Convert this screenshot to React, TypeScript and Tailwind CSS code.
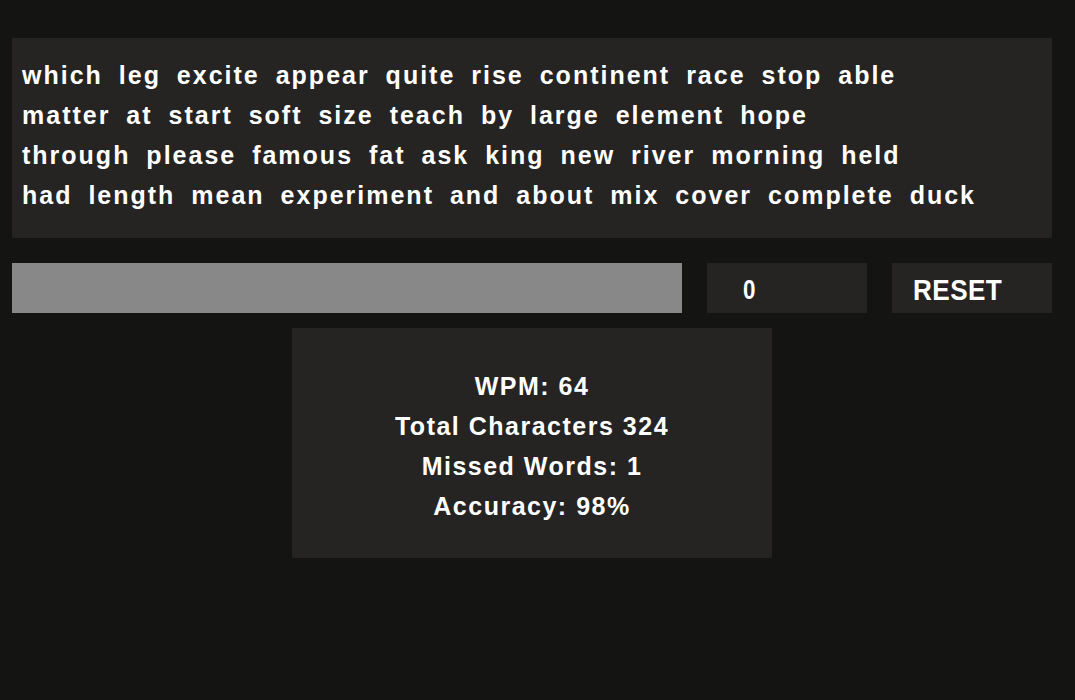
import React from 'react';

const lines = [
    'which leg excite appear quite rise continent race stop able',
    'matter at start soft size teach by large element hope',
    'through please famous fat ask king new river morning held',
    'had length mean experiment and about mix cover complete duck',
];

const stats = ['WPM: 64', 'Total Characters 324', 'Missed Words: 1', 'Accuracy: 98%'];

export default function App() {
    return (
        <div className="min-h-[700px] w-full bg-[#141413] pt-[38px] px-[12px] font-['Liberation_Sans',Arial,sans-serif] text-white">
            <div className="w-[1040px] h-[200px] bg-[#252423] pl-[10px] pt-[17px]">
                {lines.map((l) => (
                    <div key={l} className="h-[40px] leading-[40px] text-[25px] font-bold tracking-[2px] [word-spacing:7px] whitespace-nowrap">
                        {l}
                    </div>
                ))}
            </div>
            <div className="flex mt-[25px] h-[50px] w-[1040px]">
                <div className="w-[670px] bg-[#888888]" />
                <div className="w-[160px] ml-[25px] bg-[#252423] flex items-center pl-[36px] pt-[4px] text-[28px] font-bold">
                    <span className="inline-block origin-left scale-x-[0.8]">0</span>
                </div>
                <div className="w-[160px] ml-[25px] bg-[#252423] flex items-center pl-[21px] pt-[2px] text-[30px] font-bold">
                    <span className="inline-block origin-left scale-x-[0.87] tracking-[0.5px]">RESET</span>
                </div>
            </div>
            <div className="flex justify-center w-[1040px] mt-[15px]">
                <div className="w-[480px] h-[230px] bg-[#252423] flex flex-col justify-center items-center pt-[6px]">
                    {stats.map((s) => (
                        <div key={s} className="h-[40px] leading-[40px] text-[25px] font-bold tracking-[1.5px]">
                            {s}
                        </div>
                    ))}
                </div>
            </div>
        </div>
    );
}
